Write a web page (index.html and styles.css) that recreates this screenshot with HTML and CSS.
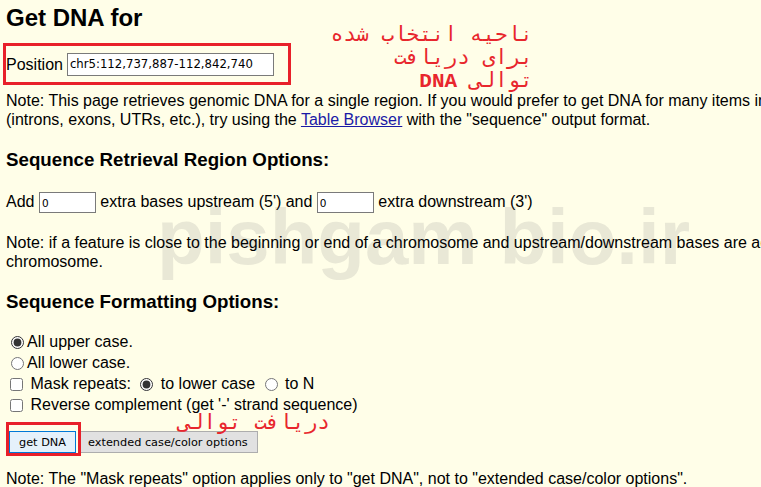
FILE: index.html
```html
<!DOCTYPE html>
<html lang="en">
<head>
    <meta charset="UTF-8">
    <title>Get DNA</title>
    <link rel="stylesheet" href="styles.css">
</head>
<body>
    <h1>Get DNA for</h1>
    <div class="pos-box">
        <span>Position</span>
        <input class="pos-input" type="text" value="chr5:112,737,887-112,842,740">
    </div>
    <p class="note">Note: This page retrieves genomic DNA for a single region. If you would prefer to get DNA for many items in a particular track, or get separate DNA for each part of a gene<br>(introns, exons, UTRs, etc.), try using the <a href="#">Table Browser</a> with the "sequence" output format.</p>

    <h3>Sequence Retrieval Region Options:</h3>
    <div class="add-row">
        Add <input class="num-input" type="text" value="0"> extra bases upstream (5') and <input class="num-input" type="text" value="0"> extra downstream (3')
    </div>
    <p class="note note-gap">Note: if a feature is close to the beginning or end of a chromosome and upstream/downstream bases are added, they may be truncated in order to avoid extending past the edge of the<br>chromosome.</p>

    <h3>Sequence Formatting Options:</h3>
    <div class="options">
        <div class="opt"><input type="radio" name="case" checked>All upper case.</div>
        <div class="opt"><input type="radio" name="case">All lower case.</div>
        <div class="opt"><input type="checkbox"> Mask repeats: <input type="radio" name="mask" checked> to lower case <input type="radio" name="mask"> to N</div>
        <div class="opt"><input type="checkbox"> Reverse complement (get '-' strand sequence)</div>
    </div>
    <div class="btn-row">
        <span class="mark"><button class="btn btn-primary">get DNA</button></span>
        <button class="btn">extended case/color options</button>
    </div>
    <p class="note last-note">Note: The "Mask repeats" option applies only to "get DNA", not to "extended case/color options".</p>

    <div class="ann ann-top" dir="rtl">ناحیه انتخاب شده<br>برای دریافت<br>توالی <b>DNA</b></div>
    <div class="ann ann-bottom" dir="rtl">دریافت توالی</div>
    <div class="watermark">pishgam bio.ir</div>
</body>
</html>
```

FILE: styles.css
```css
html {
    background: #fffee8;
    overflow: hidden;
}
body {
    position: relative;
    margin: 0;
    padding: 0 6px;
    height: 487px;
    font-family: "Liberation Sans", Arial, sans-serif;
    font-size: 16px;
    line-height: 19px;
    color: #000;
    white-space: nowrap;
    overflow: hidden;
}
h1 {
    font-size: 24px;
    line-height: 28px;
    margin: 4px 0 0;
}
h3 {
    font-size: 18.72px;
    line-height: 22px;
    margin: 20px 0 0;
}
a {
    color: #1a1aa6;
}
.pos-box {
    display: flex;
    align-items: center;
    width: 282px;
    height: 36px;
    margin: 11px 0 0 -3px;
    border: 3px solid #e8202a;
}
.pos-input {
    margin: 0 0 0 4px;
    width: 207px;
    height: 23px;
    box-sizing: border-box;
    border: 1px solid #7a7a7a;
    padding: 0 2px;
    background: #fff;
    font-family: "DejaVu Sans", sans-serif;
    font-size: 11.7px;
    color: #000;
}
.note {
    margin: 6px 0 0;
}
.note-gap {
    margin-top: 20px;
}
.add-row {
    margin-top: 20px;
    line-height: 21px;
}
.num-input {
    width: 57px;
    height: 21px;
    box-sizing: border-box;
    margin: 0;
    border: 1px solid #7a7a7a;
    padding: 0 2px;
    background: #fff;
    vertical-align: middle;
    font-family: "DejaVu Sans", sans-serif;
    font-size: 10.5px;
}
.options {
    margin-top: 18px;
}
.opt {
    line-height: 21px;
}
.opt input {
    accent-color: #333;
    vertical-align: -2px;
}
.opt input[type="radio"] {
    margin: 0 3px 0 5px;
}
.opt input[type="checkbox"] {
    margin: 0 3px 0 4px;
}
.btn-row {
    display: flex;
    gap: 2px;
    margin-top: 16px;
    padding-left: 3px;
}
.btn {
    height: 22px;
    margin: 0;
    padding: 0 9px;
    border: 1px solid #adadad;
    background: #e1e1e1;
    color: #000;
    font-family: "DejaVu Sans", sans-serif;
    font-size: 11.3px;
}
.btn-primary {
    display: block;
    background: #e5f1fb;
    border-color: #0078d7;
}
.mark {
    position: relative;
}
.mark::after {
    content: "";
    position: absolute;
    inset: -9px -5px -3px -3px;
    border: 3px solid #e8202a;
    pointer-events: none;
}
.last-note {
    margin-top: 16px;
}
.ann {
    position: absolute;
    font-family: "DejaVu Sans Mono", "Liberation Mono", monospace;
    font-size: 21px;
    line-height: 23px;
    color: #e8262d;
    text-align: right;
}
.ann b {
    font-family: "Liberation Mono", monospace;
}
.ann-top {
    right: 228px;
    top: 23px;
}
.ann-bottom {
    right: 431px;
    top: 411px;
}
.watermark {
    position: absolute;
    left: 157px;
    top: 198px;
    font-family: "Liberation Sans", Arial, sans-serif;
    font-weight: bold;
    font-size: 78px;
    line-height: 1;
    color: rgba(40, 40, 60, 0.1);
    pointer-events: none;
}
```
